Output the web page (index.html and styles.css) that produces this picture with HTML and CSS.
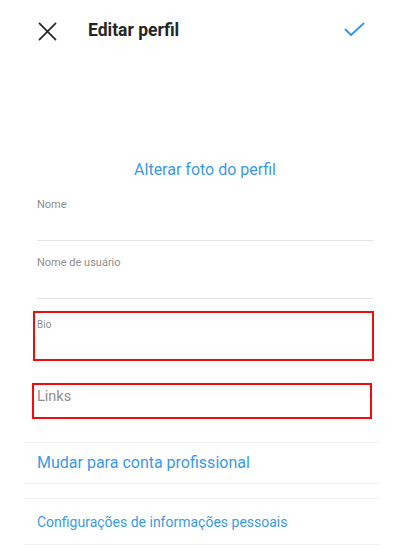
FILE: index.html
```html
<!DOCTYPE html>
<html lang="pt-BR">
<head>
  <meta charset="UTF-8" />
  <meta name="viewport" content="width=device-width, initial-scale=1.0" />
  <title>Editar perfil</title>
  <link rel="stylesheet" href="styles.css">
</head>
<body>
  <div class="edit-profile">
    <div class="top-bar">
      <button class="close-btn" aria-label="Fechar">
        <svg width="19" height="19" viewBox="0 0 20 20" fill="none" stroke="#262626" stroke-width="1.8" stroke-linecap="round">
          <path d="M1.5 1.5l17 17M18.5 1.5l-17 17"/>
        </svg>
      </button>
      <h1 class="title">Editar perfil</h1>
      <button class="done-btn" aria-label="Concluir">
        <svg width="21" height="15" viewBox="0 0 21 15" fill="none" stroke="#3897f0" stroke-width="2" stroke-linecap="round" stroke-linejoin="round">
          <path d="M1.5 7.5l5.5 5.5L19.5 1.5"/>
        </svg>
      </button>
    </div>

    <div class="photo-area">
      <a href="#" class="change-photo">Alterar foto do perfil</a>
    </div>

    <div class="fields">
      <div class="field">
        <label>Nome</label>
        <div class="field-input"></div>
      </div>
      <div class="field">
        <label>Nome de usuário</label>
        <div class="field-input"></div>
      </div>
      <div class="field marked bio">
        <label>Bio</label>
      </div>
      <div class="field marked links">
        <label>Links</label>
      </div>
    </div>

    <div class="options">
      <a href="#" class="option first">Mudar para conta profissional</a>
      <a href="#" class="option second">Configurações de informações pessoais</a>
    </div>
  </div>
</body>
</html>
```

FILE: styles.css
```css
:root {
  --blue: #3b9ae6;
  --text: #262626;
  --label: #8e8e8e;
  --line: #e2e2e2;
  --soft-line: #f2f2f2;
  --mark: #f20d0d;
}
body {
  margin: 0;
  padding: 0;
  background: #ffffff;
  font-family: Roboto, 'Liberation Sans', sans-serif;
  color: var(--text);
}
.edit-profile {
  width: 400px;
}
.top-bar {
  display: flex;
  align-items: center;
  height: 60px;
  padding: 0 35px 0 38px;
}
.close-btn, .done-btn {
  background: none;
  border: none;
  padding: 0;
  display: flex;
  cursor: pointer;
}
.close-btn { margin-top: 2px; }
.done-btn {
  margin-left: auto;
  margin-top: -1px;
}
.title {
  margin: 0 0 0 31px;
  font-size: 17.5px;
  font-weight: 700;
}
.photo-area {
  padding-top: 100px;
  text-align: center;
  padding-left: 10px;
}
.change-photo {
  color: var(--blue);
  font-size: 16px;
  line-height: 20px;
  text-decoration: none;
}
.fields {
  padding: 18px 27px 0 37px;
}
.field label {
  display: block;
  font-size: 11px;
  line-height: 14px;
  color: var(--label);
}
.field-input {
  height: 28px;
  border-bottom: 1px solid var(--line);
}
.field + .field {
  margin-top: 15px;
}
.field.marked {
  border: 2px solid var(--mark);
  margin-left: -4px;
  margin-right: -1px;
  padding-left: 2px;
}
.field.bio {
  margin-top: 12px;
  padding-top: 6px;
  box-sizing: border-box;
  height: 50px;
}
.field.bio label {
  font-size: 10px;
  line-height: 12px;
}
.field.links {
  margin-top: 22px;
  margin-left: -5px;
  margin-right: 1px;
  padding-left: 3px;
  height: 36px;
  box-sizing: border-box;
  padding-top: 2px;
}
.field.links label {
  font-size: 14.5px;
  line-height: 20px;
}
.options {
  margin: 23px 20px 0 24px;
  display: flex;
  flex-direction: column;
  gap: 14px;
}
.option {
  display: block;
  padding: 10px 13px;
  font-size: 16px;
  line-height: 20px;
  color: var(--blue);
  text-decoration: none;
  border-top: 1px solid var(--soft-line);
  border-bottom: 1px solid var(--soft-line);
}
.option.second {
  font-size: 14px;
  padding-top: 13px;
  padding-bottom: 12px;
}
```
